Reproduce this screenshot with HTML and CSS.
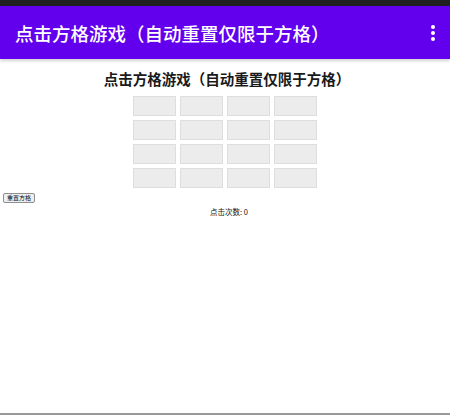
FILE: index.html
```html
<!DOCTYPE html>
<html lang="zh">
<head>
<meta charset="utf-8">
<link rel="stylesheet" href="styles.css">
</head>
<body>
<div class="page">
  <div class="status"></div>
  <header class="appbar">
    <span class="title">点击方格游戏（自动重置仅限于方格）</span>
    <svg class="menu" width="6" height="18" viewBox="0 0 6 18">
      <circle cx="3" cy="3" r="2" fill="#fff"/>
      <circle cx="3" cy="9" r="2" fill="#fff"/>
      <circle cx="3" cy="15" r="2" fill="#fff"/>
    </svg>
  </header>
  <main class="content">
    <h1 class="heading">点击方格游戏（自动重置仅限于方格）</h1>
    <div class="grid">
      <div class="cell"></div><div class="cell"></div><div class="cell"></div><div class="cell"></div>
      <div class="cell"></div><div class="cell"></div><div class="cell"></div><div class="cell"></div>
      <div class="cell"></div><div class="cell"></div><div class="cell"></div><div class="cell"></div>
      <div class="cell"></div><div class="cell"></div><div class="cell"></div><div class="cell"></div>
    </div>
    <button class="reset">重置方格</button>
    <p class="count">点击次数: 0</p>
  </main>
  <div class="bottom-line"></div>
</div>
</body>
</html>
```
FILE: styles.css
```css
html, body {
  margin: 0;
  padding: 0;
  background: #fff;
}
body {
  font-family: "Noto Sans CJK SC", "Noto Sans", sans-serif;
}
.page {
  width: 450px;
  height: 415px;
  display: flex;
  flex-direction: column;
  overflow: hidden;
}
.status {
  height: 6px;
  background: #202020;
  flex: none;
}
.appbar {
  flex: none;
  height: 53px;
  background: #6200ee;
  color: #fff;
  display: flex;
  align-items: center;
  justify-content: space-between;
  padding: 0 16px 0 15px;
  box-shadow: 0 2px 3px rgba(0,0,0,0.18);
  position: relative;
  z-index: 1;
}
.title {
  font-size: 18.5px;
  font-weight: 500;
  letter-spacing: 0;
  white-space: nowrap;
}
.menu {
  display: block;
  margin-right: -2px;
}
.content {
  flex: 1;
  display: flex;
  flex-direction: column;
}
.heading {
  margin: 10px 0 0;
  text-align: center;
  font-size: 14.5px;
  font-weight: 600;
  line-height: 20px;
  color: #1a1a1a;
  padding-left: 4px;
}
.grid {
  margin: 7px auto 0;
  display: grid;
  grid-template-columns: repeat(4, 43px);
  grid-auto-rows: 20px;
  gap: 4px;
}
.cell {
  background: #ececec;
  border: 1px solid #dedede;
  box-sizing: border-box;
}
.reset {
  align-self: flex-start;
  margin: 5px 0 0 3px;
  height: 10px;
  padding: 0 3px;
  font-family: inherit;
  font-size: 6px;
  line-height: 8px;
  color: #000;
  background: #efefef;
  border: 1px solid #8f8f8f;
  border-radius: 2px;
}
.count {
  margin: 4px 0 0;
  text-align: center;
  padding-left: 8px;
  font-size: 7.5px;
  line-height: 10px;
  color: #111;
}
.bottom-line {
  flex: none;
  height: 2px;
  background: #999;
}
```
